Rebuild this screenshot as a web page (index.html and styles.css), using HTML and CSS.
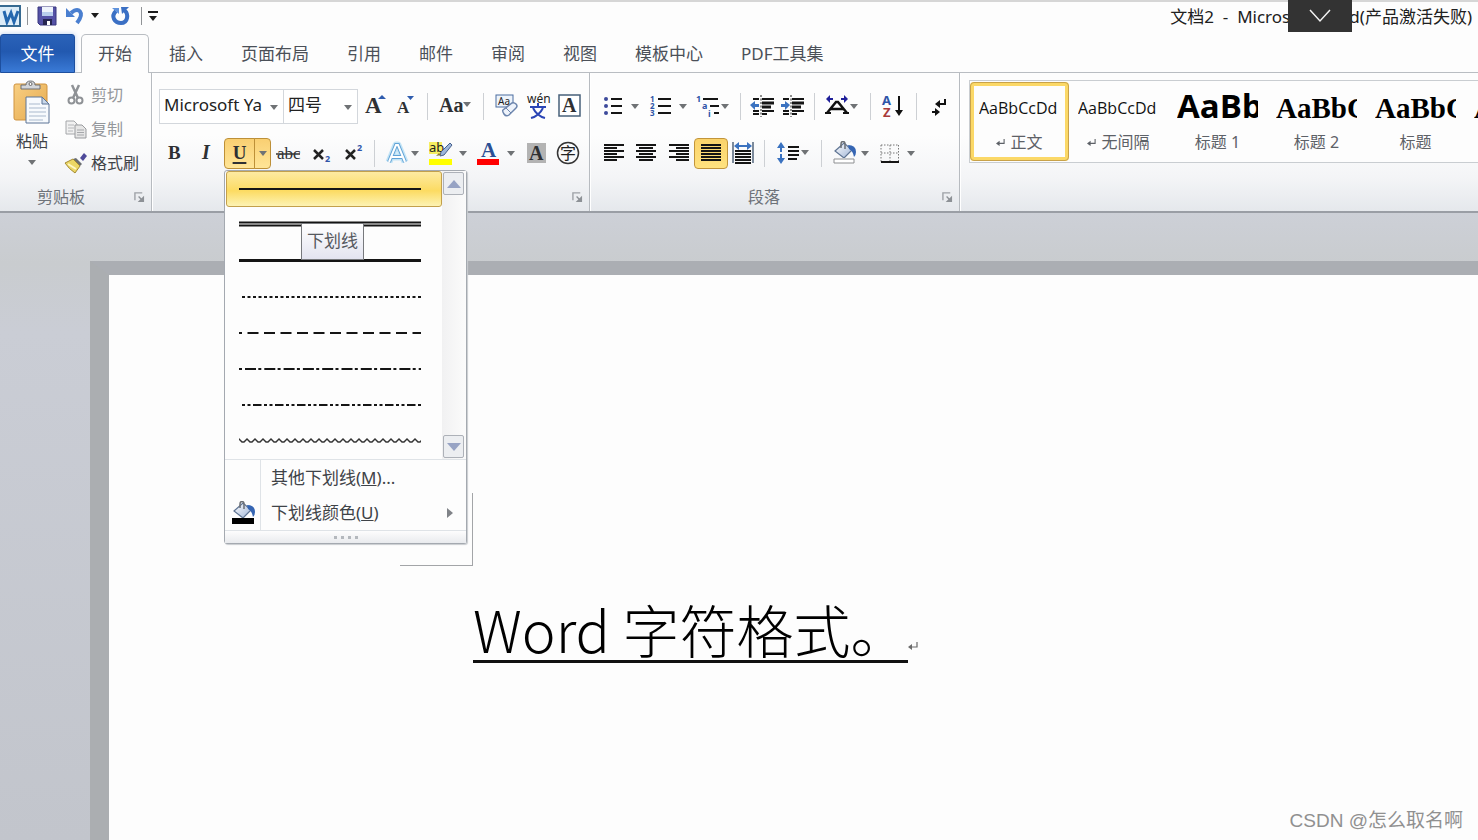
FILE: index.html
```html
<!DOCTYPE html>
<html lang="zh-CN">
<head>
<meta charset="utf-8">
<title>文档2 - Microsoft Word</title>
<link rel="stylesheet" href="styles.css">
</head>
<body>
<svg class="defs" aria-hidden="true">
  <defs>
    <linearGradient id="gold" x1="0" y1="0" x2="1" y2="1"><stop offset="0" stop-color="#f8cf83"/><stop offset="1" stop-color="#e5a94c"/></linearGradient>
    <linearGradient id="steel" x1="0" y1="0" x2="1" y2="1"><stop offset="0" stop-color="#ffffff"/><stop offset="1" stop-color="#9fb4d6"/></linearGradient>
    <pattern id="waves" width="8" height="10" patternUnits="userSpaceOnUse"><path d="M-1 4L0 3l3 3h2l3-3 1 1" fill="none" stroke="#333" stroke-width="1.500"/></pattern>
    <symbol id="arrow" viewBox="0 0 8 5"><path d="M0 0h8L4 5z" fill="#6f7275"/></symbol>
    <symbol id="launcher" viewBox="0 0 12 12"><path d="M1 9V1h8" fill="none" stroke="#9da1a6" stroke-width="1.5"/><path d="M5 5l4 4" stroke="#8d9196" stroke-width="1.5"/><path d="M11 4v7H4z" fill="#8d9196"/></symbol>
    <symbol id="bucket" viewBox="0 0 24 17"><path d="M2 10l9-8 8 7-8 8z" fill="url(#steel)" stroke="#5f7493" stroke-width="1.200"/><path d="M8 7V3q0-2.500 2-2.500t2 2.500v5" fill="none" stroke="#6b6f75" stroke-width="1.500"/><path d="M15 4q8 0 8 7 0 3-2 5-1-6-5-8z" fill="#3565b3"/></symbol>
    <symbol id="ret" viewBox="0 0 10 10"><path d="M9 1v5H2" fill="none" stroke="currentColor" stroke-width="1.200"/><path d="M0 6l4-3v6z" fill="currentColor"/></symbol>
  </defs>
</svg>

<header class="titlebar">
  <div class="qat">
    <svg width="22" height="24" viewBox="0 0 22 24"><rect x="-2" y="2" width="22" height="20" fill="#dcecf8" stroke="#376a91" stroke-width="2"/><path d="M4 7l3 11 4-9 3 9 4-11" fill="none" stroke="#2467ae" stroke-width="3"/></svg>
    <i class="bar"></i>
    <button class="tool" aria-label="保存"><svg width="20" height="20" viewBox="0 0 20 20"><path d="M1 1h18v18H3l-2-2z" fill="#5552a6" stroke="#39377f"/><path d="M5 1h11v9H5z" fill="#eef3fb"/><path d="M5 6h11v4H5z" fill="#b9cdec"/><path d="M6 13h9v6H6z" fill="#262650"/><path d="M10 15h3v4h-3z" fill="#fff"/></svg></button>
    <button class="tool undo" aria-label="撤消"><svg width="34" height="20" viewBox="0 0 34 20"><path d="M5 7q6-5 9-1.500t-3 11.500" fill="none" stroke="#4a7fd0" stroke-width="4"/><path d="M0 2v9h9z" fill="#4a7fd0"/><path d="M25 7h8l-4 5z" fill="#1c1c1c"/></svg></button>
    <button class="tool redo" aria-label="恢复"><svg width="20" height="20" viewBox="0 0 20 20"><path d="M5 5q-4 4-2 8t7 4 6-5-3-8" fill="none" stroke="#3b70c4" stroke-width="4"/><path d="M10 1h8l-7 7z" fill="#3b70c4"/><path d="M1 2h7v6z" fill="#5f92dc"/></svg></button>
    <i class="bar"></i>
    <button class="tool menu-tool" aria-label="自定义快速访问工具栏"><svg width="12" height="12" viewBox="0 0 12 12"><path d="M1 2h10" stroke="#1c1c1c" stroke-width="2"/><path d="M2 6h8l-4 5z" fill="#1c1c1c"/></svg></button>
  </div>
  <h1 class="caption">文档2&nbsp; -&nbsp; Microsoft Word(产品激活失败)</h1>
  <button class="pull" aria-label="展开"><svg width="22" height="14" viewBox="0 0 22 14"><path d="M1 1l10 11L21 1" fill="none" stroke="#f2f2f2" stroke-width="1.500"/></svg></button>
</header>

<nav class="tabs">
  <button class="file">文件</button>
  <button class="tab active">开始</button>
  <button class="tab">插入</button>
  <button class="tab">页面布局</button>
  <button class="tab">引用</button>
  <button class="tab">邮件</button>
  <button class="tab">审阅</button>
  <button class="tab">视图</button>
  <button class="tab">模板中心</button>
  <button class="tab">PDF工具集</button>
</nav>

<section class="ribbon">
  <div class="group clipboard">
    <div class="clip-body">
      <button class="paste">
        <svg width="38" height="44" viewBox="0 0 38 44"><rect x="1" y="4" width="33" height="36" rx="2" fill="url(#gold)" stroke="#cf9340"/><path d="M8 9V5h5q0-4 4.500-4T22 5h5v4z" fill="#d3d6da" stroke="#6d6f73"/><circle cx="17.500" cy="4" r="1.500" fill="#fff" stroke="#666"/><path d="M13 17h16l7 7v19H13z" fill="#f7fafd" stroke="#5c7596"/><path d="M29 17v7h7z" fill="#c9d8ea" stroke="#5c7596"/><path d="M16 24h11M16 28h17M16 32h17M16 36h17M16 40h14" stroke="#a9b9cd"/></svg>
        <span>粘贴</span>
        <svg width="8" height="5"><use href="#arrow"/></svg>
      </button>
      <div class="clip-list">
        <button class="clip-item off" disabled><svg width="22" height="22" viewBox="0 0 22 22"><path d="M7 1l6 13M14 1L8 14" stroke="#8f9296" stroke-width="2.500"/><circle cx="6.500" cy="16.500" r="3" fill="none" stroke="#8f9296" stroke-width="2"/><circle cx="14.500" cy="16.500" r="3" fill="none" stroke="#8f9296" stroke-width="2"/></svg>剪切</button>
        <button class="clip-item off" disabled><svg width="22" height="22" viewBox="0 0 22 22"><path d="M1 3h8l3 3v10H1z" fill="#f1f1f1" stroke="#a4a6a9"/><path d="M3 7h6M3 10h6M3 13h5" stroke="#b5b7ba"/><path d="M10 7h7l4 4v9H10z" fill="#e6e6e6" stroke="#999b9e"/><path d="M12 12h7M12 14.500h7M12 17h7" stroke="#a5a7aa"/></svg>复制</button>
        <button class="clip-item"><svg width="22" height="22" viewBox="0 0 22 22"><path d="M15 6l4-5 3 3-4 5z" fill="#4e4a9a"/><path d="M11 6l6 6-2 2-7-7z" fill="#6b6e72"/><path d="M8 7l7 7-5 7Q4 17 0 11z" fill="#ecd765" stroke="#a48b33"/><path d="M3 12l8 5" stroke="#fff8c4" stroke-width="2"/></svg>格式刷</button>
      </div>
    </div>
    <div class="foot"><span>剪贴板</span><button class="tool" aria-label="剪贴板设置"><svg width="11" height="11"><use href="#launcher"/></svg></button></div>
  </div>

  <div class="group font">
    <div class="row font-one">
      <div class="combo"><select aria-label="字体"><option>Microsoft Ya</option></select><svg width="8" height="5"><use href="#arrow"/></svg></div>
      <div class="combo size"><select aria-label="字号"><option>四号</option></select><svg width="8" height="5"><use href="#arrow"/></svg></div>
      <button class="tool" aria-label="增大字体"><svg width="30" height="32"><text x="5" y="22" class="serif" font-size="23">A</text><path d="M18 8l4-4 4 4z" fill="#2f5cae"/></svg></button>
      <button class="tool" aria-label="缩小字体"><svg width="30" height="32"><text x="7" y="22" class="serif" font-size="17">A</text><path d="M17 5h7l-3.500 4z" fill="#2f5cae"/></svg></button>
      <i class="sep"></i>
      <button class="tool" aria-label="更改大小写"><svg width="42" height="32"><text x="5" y="21" class="serif" font-size="20">Aa</text><use href="#arrow" x="29" y="11" width="8" height="5"/></svg></button>
      <i class="sep"></i>
      <button class="tool" aria-label="清除格式"><svg width="32" height="32"><rect x="6" y="4" width="17" height="12" fill="#eef4fb" stroke="#4a6da0"/><text x="8" y="14" class="sans" font-size="10">Aa</text><path d="M13 19l9-7q2-1 4 1t0 4l-7 7q-3 2-5-1t-1-4z" fill="#eef3fb" stroke="#6c85ad" stroke-width="1.500"/><path d="M16 17l5 5" stroke="#6c85ad"/></svg></button>
      <button class="tool" aria-label="拼音指南"><svg width="32" height="32"><text x="5" y="12" class="sans" font-size="12">wén</text><path d="M16 12v4M8 16h16M11 17q4 8 12 10M21 17q-4 8-12 10" fill="none" stroke="#2b45b5" stroke-width="2"/></svg></button>
      <button class="tool" aria-label="字符边框"><svg width="32" height="32"><rect x="5" y="4" width="21" height="21" fill="#fff" stroke="#47607a" stroke-width="1.500"/><text x="8" y="21" class="serif" font-size="20">A</text></svg></button>
    </div>
    <div class="row font-two">
      <button class="tool" aria-label="加粗"><svg width="31" height="32"><text x="9" y="22" class="serif" font-size="19">B</text></svg></button>
      <button class="tool" aria-label="倾斜"><svg width="32" height="32"><text x="12" y="22" class="serif slant" font-size="20">I</text></svg></button>
      <div class="under">
        <button class="under-main" aria-label="下划线">U</button><button class="under-drop" aria-label="下划线样式"><svg width="8" height="5"><use href="#arrow"/></svg></button>
        <div class="menu">
          <div class="menu-list">
            <div class="lines">
              <button class="line picked" aria-label="下划线"><svg width="182" height="10"><path d="M0 5h182" class="ink two"/></svg></button>
              <button class="line" aria-label="双下划线"><svg width="182" height="10"><path d="M0 2.500h182M0 5.500h182" class="ink double"/></svg></button>
              <button class="line" aria-label="粗线"><svg width="182" height="10"><path d="M0 4.500h182" class="ink three"/></svg></button>
              <button class="line" aria-label="点式下划线"><svg width="182" height="10"><path d="M3 5h179" class="ink two" stroke-dasharray="3 2.500"/></svg></button>
              <button class="line" aria-label="虚线下划线"><svg width="182" height="10"><path d="M0 5h182" class="ink two" stroke-dasharray="11 5.500" stroke-dashoffset="8"/></svg></button>
              <button class="line" aria-label="点-短线下划线"><svg width="182" height="10"><path d="M0 5h182" class="ink two" stroke-dasharray="3 3 11 2.300"/></svg></button>
              <button class="line" aria-label="点-点-短线下划线"><svg width="182" height="10"><path d="M3 5h179" class="ink two" stroke-dasharray="3 2.500 3 2.500 8.500 2.500"/></svg></button>
              <button class="line" aria-label="波浪线"><svg width="182" height="10"><rect width="182" height="10" fill="url(#waves)"/></svg></button>
            </div>
            <div class="scroll">
              <button class="scroll-btn" aria-label="向上"><svg width="14" height="8" viewBox="0 0 14 8"><path d="M0 8l7-8 7 8z" fill="#97a3c4"/></svg></button>
              <button class="scroll-btn" aria-label="向下"><svg width="14" height="8" viewBox="0 0 14 8"><path d="M0 0h14L7 8z" fill="#97a3c4"/></svg></button>
            </div>
          </div>
          <div class="menu-more">
            <button class="more"><span class="mark"></span><span class="more-text">其他下划线(<u>M</u>)...</span></button>
            <button class="more"><span class="mark"><svg width="24" height="24"><use href="#bucket" x="1" y="0" width="24" height="17"/><path d="M1 17h22v6H1z" fill="#000"/></svg></span><span class="more-text">下划线颜色(<u>U</u>)</span><svg width="6" height="10" viewBox="0 0 6 10"><path d="M0 0l6 5-6 5z" fill="#808388"/></svg></button>
          </div>
          <div class="grip"><i></i><i></i><i></i><i></i></div>
          <div class="tip" role="tooltip">下划线</div>
        </div>
      </div>
      <button class="tool" aria-label="删除线"><svg width="32" height="32"><text x="5" y="22" class="serif plain" font-size="17">abc</text><path d="M4 17h24" stroke="#333" stroke-width="1.500"/></svg></button>
      <button class="tool" aria-label="下标"><svg width="32" height="32"><path d="M10 13l9 9M19 13l-9 9" stroke="#222" stroke-width="2.500"/><text x="21" y="25" class="sans num" font-size="9">2</text></svg></button>
      <button class="tool" aria-label="上标"><svg width="32" height="32"><path d="M10 13l9 9M19 13l-9 9" stroke="#222" stroke-width="2.500"/><text x="21" y="14" class="sans num" font-size="9">2</text></svg></button>
      <i class="sep"></i>
      <button class="tool" aria-label="文本效果"><svg width="44" height="32"><path d="M9 25l7-17h2l7 17M12 20h10" fill="none" stroke="#c3e4f6" stroke-width="7" stroke-linejoin="round"/><path d="M9 25l7-17h2l7 17M12 20h10" fill="none" stroke="#62a3d6" stroke-width="4"/><path d="M9 25l7-17h2l7 17M12 20h10" fill="none" stroke="#fff" stroke-width="2"/><use href="#arrow" x="31" y="14" width="8" height="5"/></svg></button>
      <button class="tool" aria-label="突出显示"><svg width="46" height="32"><rect x="5" y="5" width="13" height="12" fill="#f6ee62"/><text x="5" y="15" class="sans" font-size="13">ab</text><path d="M26 6l2 2-8 10-4 1 1-4z" fill="#9db6dc" stroke="#47618c"/><path d="M12 19l5-1-2-2z" fill="#8e7a30"/><path d="M5 22h23v6H5z" fill="#ff0"/><use href="#arrow" x="35" y="14" width="8" height="5"/></svg></button>
      <button class="tool" aria-label="字体颜色"><svg width="50" height="32"><text x="11" y="20" class="serif ink-blue" font-size="21">A</text><path d="M7 22h22v6H7z" fill="#f00"/><use href="#arrow" x="37" y="14" width="8" height="5"/></svg></button>
      <button class="tool" aria-label="字符底纹"><svg width="32" height="32"><rect x="7" y="6" width="19" height="20" fill="#b3b3b3"/><text x="9" y="23" class="serif" font-size="20">A</text></svg></button>
      <button class="tool" aria-label="带圈字符"><svg width="32" height="32"><circle cx="16" cy="16" r="10.500" fill="none" stroke="#333" stroke-width="1.500"/><text x="8" y="22" class="sans" font-size="16">字</text></svg></button>
    </div>
    <div class="foot"><span></span><button class="tool" aria-label="字体设置"><svg width="11" height="11"><use href="#launcher"/></svg></button></div>
  </div>

  <div class="group para">
    <div class="row para-one">
      <button class="tool" aria-label="项目符号"><svg width="44" height="32"><g fill="#3d4a9b"><circle cx="8" cy="9" r="2"/><circle cx="8" cy="16" r="2"/><circle cx="8" cy="23" r="2"/></g><path d="M13 9h11M13 16h11M13 23h11" class="ink bar-line"/><use href="#arrow" x="33" y="14" width="8" height="5"/></svg></button>
      <button class="tool" aria-label="编号"><svg width="48" height="32"><g class="sans num" font-size="8"><text x="8" y="12">1</text><text x="8" y="19">2</text><text x="8" y="26">3</text></g><path d="M16 9h13M16 16h13M16 23h13" class="ink bar-line"/><use href="#arrow" x="37" y="14" width="8" height="5"/></svg></button>
      <button class="tool" aria-label="多级列表"><svg width="44" height="32"><g class="sans num" font-size="9"><text x="6" y="12">1</text><text x="12" y="19">a</text><text x="18" y="27">i</text></g><path d="M13 9h15M20 16h9M24 23h5" class="ink bar-line"/><use href="#arrow" x="31" y="14" width="8" height="5"/></svg></button>
      <i class="sep"></i>
      <button class="tool" aria-label="减少缩进量"><svg width="32" height="32"><path d="M7 9h6M7 21h6M7 24h6M16 9h12M16 21h12" class="ink bar-line"/><path d="M16 13h12M16 17h9" class="ink three"/><path d="M16 24h5" class="ink bar-line"/><path d="M15 5v22" stroke="#222" stroke-dasharray="2 1.500"/><path d="M4 15l5-4v3h4v3H9v3z" fill="#3a72c0"/></svg></button>
      <button class="tool" aria-label="增加缩进量"><svg width="30" height="32"><path d="M5 9h6M5 21h6M5 24h6M14 9h12M14 21h12" class="ink bar-line"/><path d="M14 13h12M14 17h9" class="ink three"/><path d="M14 24h5" class="ink bar-line"/><path d="M13 5v22" stroke="#222" stroke-dasharray="2 1.500"/><path d="M12 15l-5-4v3H3v3h4v3z" fill="#3a72c0"/></svg></button>
      <i class="sep"></i>
      <button class="tool" aria-label="中文版式"><svg width="44" height="32"><path d="M7 23l9-11h2l9 11M11 19h12" fill="none" stroke="#111" stroke-width="2.500"/><path d="M5 23h6M23 23h6" stroke="#111" stroke-width="2"/><path d="M6 9l4-4v3h3v2h-3v3zM28 9l-4-4v3h-3v2h3v3z" fill="#20209a"/><use href="#arrow" x="30" y="14" width="8" height="5"/></svg></button>
      <i class="sep"></i>
      <button class="tool" aria-label="排序"><svg width="34" height="32"><text x="6" y="15" class="sans num" font-size="13">A</text><text x="7" y="27" class="sans red" font-size="13">Z</text><path d="M23 6v18" stroke="#111" stroke-width="2"/><path d="M19 20h8l-4 6z" fill="#111"/></svg></button>
      <i class="sep"></i>
      <button class="tool" aria-label="显示编辑标记"><svg width="32" height="32"><path d="M23 9v5h-7M10 22h6" fill="none" stroke="#111" stroke-width="2"/><path d="M13 14l5-4v8zM18 22l-5-4v8z" fill="#111"/></svg></button>
    </div>
    <div class="row para-two">
      <button class="tool" aria-label="左对齐"><svg width="31" height="32"><path d="M6 8h20M6 11h13M6 14h20M6 17h13M6 20h20M6 23h13" class="ink bar-line"/></svg></button>
      <button class="tool" aria-label="居中"><svg width="32" height="32"><path d="M7 8h20M10 11h14M7 14h20M10 17h14M7 20h20M10 23h14" class="ink bar-line"/></svg></button>
      <button class="tool" aria-label="右对齐"><svg width="33" height="32"><path d="M8 8h20M15 11h13M8 14h20M15 17h13M8 20h20M15 23h13" class="ink bar-line"/></svg></button>
      <button class="tool on" aria-label="两端对齐"><svg width="32" height="28"><path d="M6 6h20M6 9h20M6 12h20M6 15h20M6 18h20M6 21h20" class="ink bar-line"/></svg></button>
      <button class="tool" aria-label="分散对齐"><svg width="30" height="32"><path d="M5 5v21M25 5v21" stroke="#53657c" stroke-width="1.500"/><path d="M6 9l5-4v3h8V5l5 4-5 4v-3h-8v3z" fill="#3a72c0"/><path d="M7 14h16M7 17h16M7 20h16M7 23h16M7 26h16" class="ink bar-line"/></svg></button>
      <i class="sep"></i>
      <button class="tool" aria-label="行距"><svg width="44" height="32"><path d="M10 5l4 6h-3v4H9v-4H6zM10 27l4-6h-3v-4H9v4H6z" fill="#3a72c0"/><path d="M17 10h11M17 14h11M17 18h11M17 22h9" class="ink bar-line"/><use href="#arrow" x="30" y="13" width="8" height="5"/></svg></button>
      <i class="sep"></i>
      <button class="tool" aria-label="底纹"><svg width="48" height="32"><use href="#bucket" x="5" y="4" width="24" height="17"/><path d="M6 22h20v4H6z" fill="#fff" stroke="#8d8f92"/><use href="#arrow" x="33" y="14" width="8" height="5"/></svg></button>
      <button class="tool" aria-label="边框"><svg width="44" height="32"><path d="M5 8h18M5 16h18M5 8v17M14 8v17M22.500 8v17" fill="none" stroke="#777" stroke-dasharray="1.500 1.500"/><path d="M5 25h18" class="ink bar-line"/><use href="#arrow" x="31" y="14" width="8" height="5"/></svg></button>
    </div>
    <div class="foot"><span>段落</span><button class="tool" aria-label="段落设置"><svg width="11" height="11"><use href="#launcher"/></svg></button></div>
  </div>

  <div class="group styles">
    <div class="gallery">
      <button class="style chosen"><span class="sample">AaBbCcDd</span><span class="name"><svg width="9" height="9"><use href="#ret"/></svg>正文</span></button>
      <button class="style"><span class="sample">AaBbCcDd</span><span class="name"><svg width="9" height="9"><use href="#ret"/></svg>无间隔</span></button>
      <button class="style"><span class="sample h-one">AaBb</span><span class="name">标题 1</span></button>
      <button class="style"><span class="sample h-two">AaBbC</span><span class="name">标题 2</span></button>
      <button class="style"><span class="sample h-two">AaBbC</span><span class="name">标题</span></button>
      <button class="style"><span class="sample h-two">AaBbC</span><span class="name">副标题</span></button>
    </div>
  </div>
</section>

<main class="desk">
  <article class="sheet">
    <div class="corner"></div>
    <p class="para-text"><span class="typed">Word 字符格式。</span><svg width="10" height="10"><use href="#ret"/></svg></p>
  </article>
  <div class="credit">CSDN @怎么取名啊</div>
</main>
</body>
</html>
```
FILE: styles.css
```css
* { box-sizing: border-box; }
body {
  margin: 0;
  height: 100vh;
  display: flex;
  flex-direction: column;
  overflow: hidden;
  background: #fdfdfd;
  color: #3f4348;
  font: 16px/20px "Noto Sans", "Noto Sans CJK SC", sans-serif;
}
button, select {
  margin: 0;
  padding: 0;
  border: 0;
  background: none;
  color: inherit;
  font: inherit;
}
svg { display: block; flex: none; overflow: visible; }
.defs { position: absolute; width: 0; height: 0; }
i { font-style: normal; }

.titlebar {
  position: relative;
  flex: none;
  display: flex;
  justify-content: space-between;
  height: 34px;
  padding-right: 6px;
  border-top: 2px solid #d6d6d6;
}
.qat { display: flex; align-items: center; height: 27px; gap: 5px; }
.qat .bar { width: 1px; height: 18px; background: #909396; }
.qat .tool { margin-left: 4px; }
.qat .undo { margin-right: 2px; }
.qat .redo { margin-right: 5px; }
.qat .menu-tool { margin-left: 0; }
.caption { margin: 0; padding-top: 5px; font-size: 17px; font-weight: 400; color: #202020; }
.pull {
  position: absolute;
  top: -2px;
  right: 126px;
  width: 64px;
  height: 32px;
  background: #333;
  display: grid;
  place-items: center;
}

.tabs {
  flex: none;
  display: flex;
  height: 39px;
  font-size: 17px;
  color: #4b5058;
  box-shadow: inset 0 -1px #b9bdc2;
}
.file {
  width: 75px;
  margin-right: 6px;
  border: 1px solid #1d4f9f;
  border-radius: 3px 3px 0 0;
  background: linear-gradient(#2a62b8, #2259b0 45%, #3a7ad6);
  box-shadow: 0 0 5px #b9cff0;
  color: #fff;
}
.tab { padding: 0 19px; }
.tab.active {
  margin-right: 1px;
  padding: 0 16px;
  border: 1px solid #b9bdc2;
  border-bottom: 0;
  border-radius: 5px 5px 0 0;
  background: #fdfdfd;
}

.ribbon {
  flex: none;
  display: flex;
  height: 140px;
  border-bottom: 2px solid #9a9ea5;
  background: linear-gradient(#fdfdfd 45%, #f4f5f7 75%, #e5e8ec);
}
.group {
  flex: none;
  display: flex;
  flex-direction: column;
  border-right: 1px solid #b7bbc0;
  box-shadow: 1px 0 #fff;
}
.clipboard { width: 152px; padding-top: 5px; }
.font { width: 438px; padding: 16px 0 0 7px; }
.para { width: 370px; padding: 16px 0 0 8px; }
.styles { flex: 1; min-width: 0; padding: 7px 0 0 9px; border: 0; }
.foot {
  display: flex;
  align-items: center;
  justify-content: space-between;
  margin-top: auto;
  padding: 0 6px 0 0;
  height: 28px;
  color: #6d7279;
}
.foot span { flex: 1; padding-right: 12px; text-align: center; }
.tool { display: grid; place-items: center; }

.clip-body { display: flex; }
.paste {
  width: 62px;
  display: flex;
  flex-direction: column;
  align-items: center;
  gap: 9px;
  padding: 2px 0 0 2px;
}
.paste span { margin-top: -2px; }
.clip-list { display: flex; flex-direction: column; padding-left: 3px; }
.clip-item { display: flex; align-items: center; gap: 4px; height: 34px; }
.off { color: #94979b; }

.row { display: grid; height: 34px; align-items: center; }
.font-one { grid-template-columns: 125px 76px 30px 30px 14px 42px 14px 32px 32px 32px; }
.font-two { grid-template-columns: 31px 32px 50px 32px 32px 32px 12px 44px 46px 50px 32px 32px; }
.para-one { grid-template-columns: 44px 48px 44px 12px 32px 30px 12px 44px 12px 34px 12px 32px; }
.para-two { grid-template-columns: 31px 32px 33px 34px 30px 13px 44px 13px 48px 44px; }
.font-two, .para-two { margin-top: 13px; }
.sep { justify-self: center; width: 1px; height: 27px; background: #cdd0d4; }
.combo {
  position: relative;
  height: 35px;
  border: 1px solid #d3d7dc;
  background: #fff;
}
.combo.size { width: 75px; margin-left: -1px; }
.combo select {
  width: 100%;
  height: 100%;
  padding: 0 4px 3px;
  appearance: none;
  color: #222;
  font-size: 17px;
  line-height: 24px;
}
.combo svg { position: absolute; right: 5px; top: 15px; }
.serif { font-family: "Liberation Serif", serif; font-weight: 700; fill: #2e3033; }
.slant { font-style: italic; }
.plain { font-weight: 400; }
.sans { font-family: "Noto Sans", "Noto Sans CJK SC", sans-serif; fill: #222; }
.num { fill: #2f55a8; font-weight: 700; }
.red { fill: #a83a3a; font-weight: 700; }
.ink-blue { fill: #2b4f94; }
.ink { stroke: #151515; stroke-width: 1; fill: none; }
.double { stroke-width: 2; }
.two { stroke-width: 2; }
.three { stroke-width: 3; }
.bar-line { stroke-width: 2; }
.on {
  height: 31px;
  border: 1px solid #c2953b;
  border-radius: 4px;
  background: linear-gradient(#fbd36b, #ffe27f);
}

.under { position: relative; display: flex; padding-left: 2px; height: 32px; align-items: center; }
.under-main, .under-drop {
  height: 31px;
  border: 1px solid #bd9038;
  background: linear-gradient(#f9cf72, #ffe597);
}
.under-main {
  width: 31px;
  border-radius: 4px 0 0 4px;
  font: 700 19px/20px "Liberation Serif", serif;
  color: #2e3033;
  text-decoration: underline;
  text-decoration-thickness: 2px;
  text-underline-offset: 3px;
}
.under-drop {
  width: 17px;
  margin-left: -1px;
  border-radius: 0 4px 4px 0;
  display: grid;
  place-items: center;
}

.menu {
  position: absolute;
  z-index: 5;
  top: 33px;
  left: 2px;
  width: 243px;
  border: 1px solid #a4a9b0;
  border-radius: 3px;
  background: #fdfdfd;
  box-shadow: 1px 1px 1px #c9ccd0;
}
.menu-list { display: flex; border-bottom: 1px solid #dfe3e7; }
.lines { flex: 1; display: flex; flex-direction: column; padding-left: 1px; }
.line { display: flex; align-items: center; height: 36px; padding-left: 13px; border-radius: 3px; }
.line.picked {
  padding-left: 12px;
  border: 1px solid #c3a04c;
  background: linear-gradient(#fdeaa2, #fcdb62 55%, #fdf3b4);
}
.scroll {
  display: flex;
  flex-direction: column;
  justify-content: space-between;
  padding: 1px 1px 1px 1px;
  width: 24px;
  background: linear-gradient(90deg, #f1f1f2, #fbfbfb);
}
.scroll-btn {
  width: 21px;
  height: 23px;
  border: 1px solid #adb1b8;
  border-radius: 2px;
  background: #eceef1;
  display: grid;
  place-items: center;
}
.menu-more { display: flex; flex-direction: column; font-size: 17px; }
.more { display: flex; align-items: stretch; height: 35px; padding-right: 13px; text-align: left; }
.more > svg { align-self: center; }
.mark {
  display: grid;
  place-items: center;
  width: 36px;
  border-right: 1px solid #dfe3e7;
}
.more-text { flex: 1; align-self: center; padding-left: 10px; }
.grip {
  display: flex;
  align-items: center;
  justify-content: center;
  gap: 4px;
  height: 13px;
  border-top: 1px solid #dfe3e7;
  background: linear-gradient(#fdfdfd, #e9ebee);
}
.grip i { width: 3px; height: 3px; background: #b4b8bd; }
.tip {
  position: absolute;
  top: 52px;
  left: 76px;
  width: 63px;
  height: 37px;
  border: 1px solid #77797d;
  background: linear-gradient(#fff, #e3e4f0);
  color: #55585e;
  font-size: 17px;
  line-height: 34px;
  text-align: center;
}

.gallery {
  display: flex;
  height: 83px;
  overflow: hidden;
  border: 1px solid #c9cdd1;
  border-right: 0;
  background: #fdfdfd;
}
.style {
  flex: none;
  width: 99px;
  display: flex;
  flex-direction: column;
  align-items: center;
  padding: 10px 9px 0;
}
.style.chosen {
  height: 79px;
  margin-top: 1px;
  padding: 5px 4px 0;
  border: 4px solid #fbd867;
  border-radius: 4px;
  outline: 1px solid #c8a24a;
  outline-offset: -1px;
}
.sample {
  width: 81px;
  height: 34px;
  overflow: hidden;
  white-space: nowrap;
  text-align: left;
  color: #111;
  font: 16px/34px "Open Sans", sans-serif;
}
.h-one { font-size: 33px; font-weight: 700; line-height: 30px; color: #000; }
.h-two { font: 700 29px/34px "Liberation Serif", serif; color: #000; }
.name { display: flex; align-items: center; gap: 5px; margin-top: 7px; color: #5d6167; white-space: nowrap; }

.desk {
  position: relative;
  flex: 1;
  min-height: 0;
  overflow: hidden;
  padding: 48px 0 0 90px;
  background: linear-gradient(#cdd0d7, #c9cccf 50px, #cacdd5 120px, #c2c5cc);
}
.sheet {
  min-height: 100%;
  padding: 218px 0 0 291px;
  border-top: 14px solid #abaeb3;
  border-left: 19px solid #abaeb1;
  background: #fdfdfd;
}
.corner { width: 73px; height: 73px; border: solid #a3a5a8; border-width: 0 1px 1px 0; }
.para-text { display: flex; align-items: flex-end; margin: 30px 0 0 73px; color: #6b6b6b; }
.para-text svg { margin-bottom: 12px; }
.typed {
  border-bottom: 3px solid #111;
  color: #000;
  font: 300 57px/64px "Noto Sans CJK SC", sans-serif;
}
.credit {
  position: absolute;
  right: 15px;
  bottom: 8px;
  font: 19px/22px "Liberation Sans", "Noto Sans CJK SC", sans-serif;
  color: #909090;
}
```
